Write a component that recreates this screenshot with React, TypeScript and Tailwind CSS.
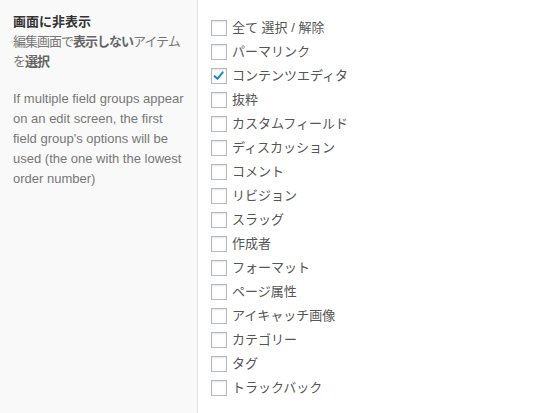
import React from "react";

const items: { label: string; checked?: boolean }[] = [
  { label: "全て 選択 / 解除" },
  { label: "パーマリンク" },
  { label: "コンテンツエディタ", checked: true },
  { label: "抜粋" },
  { label: "カスタムフィールド" },
  { label: "ディスカッション" },
  { label: "コメント" },
  { label: "リビジョン" },
  { label: "スラッグ" },
  { label: "作成者" },
  { label: "フォーマット" },
  { label: "ページ属性" },
  { label: "アイキャッチ画像" },
  { label: "カテゴリー" },
  { label: "タグ" },
  { label: "トラックバック" },
];

export default function App() {
  return (
    <div
      className="flex w-[550px] h-[413px] bg-white text-[#444]"
      style={{ fontFamily: '"Liberation Sans", "Noto Sans CJK JP", sans-serif' }}
    >
      <div className="w-[198px] shrink-0 bg-[#f9f9f9] border-r border-[#e1e1e1] pl-[13px] pr-[12px] pt-[12px]">
        <div className="text-[13px] leading-[20px] font-bold text-[#333]">画面に非表示</div>
        <div className="text-[13px] leading-[20px] tracking-[-1px] text-[#777]">
          編集画面で<span className="font-bold text-[#666]">表示しない</span>アイテムを<span className="font-bold text-[#666]">選択</span>
        </div>
        <div className="mt-[17px] text-[13px] leading-[20px] text-[#777]">
          If multiple field groups appear on an edit screen, the first field group's options will be used (the one with the lowest order number)
        </div>
      </div>
      <div className="flex flex-col pl-[13px] pt-[16px]">
        {items.map((it) => (
          <div key={it.label} className="flex items-center h-[24px] gap-[5px]">
            <span className="relative w-[16px] h-[16px] bg-white border border-[#b4b9be] shadow-[inset_0_1px_2px_rgba(0,0,0,0.1)] shrink-0">
              {it.checked && (
                <svg viewBox="0 0 16 16" className="absolute left-[0px] top-[0px] w-[14px] h-[14px]">
                  <path d="M3 8.2 L6.2 11.2 L12.2 3.8" fill="none" stroke="#1e8cbe" strokeWidth="2.4" strokeLinecap="round" strokeLinejoin="round" />
                </svg>
              )}
            </span>
            <span className="text-[13px] leading-[20px] text-[#555]">{it.label}</span>
          </div>
        ))}
      </div>
    </div>
  );
}
